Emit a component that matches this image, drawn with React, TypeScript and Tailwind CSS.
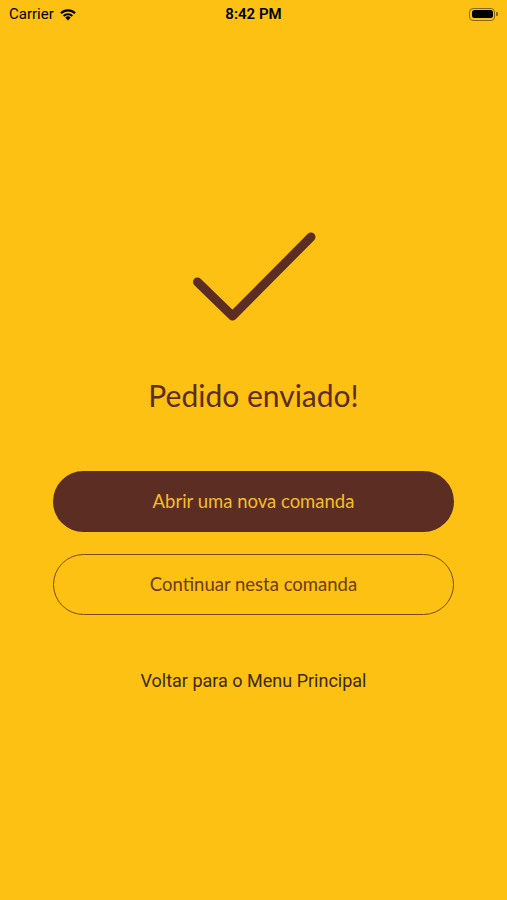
import React from 'react';

const StatusBar: React.FC = () => (
    <div className="relative flex h-[28px] items-center justify-between px-[9px] text-[15px] text-black">
        <div className="flex items-center gap-[5px] font-['Roboto',sans-serif]">
            <span>Carrier</span>
            <svg width="18" height="13" viewBox="0 0 18 13">
                <path d="M9 12.5 L6.3 9.6 A3.8 3.8 0 0 1 11.7 9.6 Z" fill="#000" />
                <path d="M3.9 7.3 A7.2 7.2 0 0 1 14.1 7.3 L12.6 8.8 A5.1 5.1 0 0 0 5.4 8.8 Z" fill="#000" />
                <path d="M1.2 4.6 A11 11 0 0 1 16.8 4.6 L15.3 6.1 A8.9 8.9 0 0 0 2.7 6.1 Z" fill="#000" />
            </svg>
        </div>
        <span className="absolute left-1/2 -translate-x-1/2 font-['Roboto',sans-serif] font-semibold">8:42 PM</span>
        <div className="flex items-center">
            <div className="h-[13px] w-[26px] rounded-[4px] border border-[#8a6a10] p-[1.5px]">
                <div className="h-full w-full rounded-[2.5px] bg-black" />
            </div>
            <div className="ml-[1px] h-[4px] w-[2px] rounded-r-[1px] bg-[#8a6a10]" />
        </div>
    </div>
);

export default function App() {
    return (
        <div className="flex h-[900px] w-[507px] flex-col bg-[#fdc114] font-['Lato',sans-serif]">
            <StatusBar />

            {/* check mark */}
            <div className="mt-[201px] flex justify-center">
                <svg width="130" height="95" viewBox="0 0 130 95">
                    <path d="M8.5 53 L43.5 87 L122 8" fill="none" stroke="#5c2d22" strokeWidth="9" strokeLinecap="round" strokeLinejoin="round" />
                </svg>
            </div>

            <h1 className="mt-[53px] text-center text-[30px] leading-[36px] text-[#5c2d22]">Pedido enviado!</h1>

            <div className="mt-[58px] flex flex-col gap-[22px] px-[53px]">
                <button className="h-[61px] w-full rounded-full bg-[#5c2d22] text-[18.5px] text-[#f5bd2a]">
                    Abrir uma nova comanda
                </button>
                <button className="h-[61px] w-full rounded-full border-[1.5px] border-[#7a4a12] text-[18.5px] text-[#6b3c12]">
                    Continuar nesta comanda
                </button>
            </div>

            <div className="mt-[54px] text-center font-['Roboto',sans-serif] text-[18px] leading-[24px] text-[#3b2a0c]">
                Voltar para o Menu Principal
            </div>
        </div>
    );
}
